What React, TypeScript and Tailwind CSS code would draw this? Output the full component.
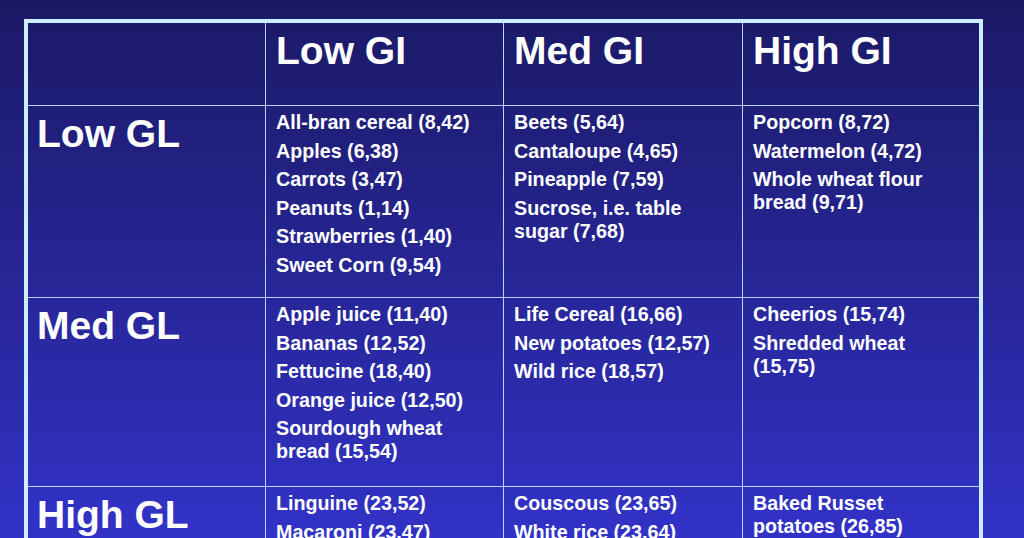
import React from "react";

const colHeads = ["Low GI", "Med GI", "High GI"];
const rows: { head: string; cells: string[][] }[] = [
  {
    head: "Low GL",
    cells: [
      ["All-bran cereal (8,42)", "Apples (6,38)", "Carrots (3,47)", "Peanuts (1,14)", "Strawberries (1,40)", "Sweet Corn (9,54)"],
      ["Beets (5,64)", "Cantaloupe (4,65)", "Pineapple (7,59)", "Sucrose, i.e. table sugar (7,68)"],
      ["Popcorn (8,72)", "Watermelon (4,72)", "Whole wheat flour bread (9,71)"],
    ],
  },
  {
    head: "Med GL",
    cells: [
      ["Apple juice (11,40)", "Bananas (12,52)", "Fettucine (18,40)", "Orange juice (12,50)", "Sourdough wheat bread (15,54)"],
      ["Life Cereal (16,66)", "New potatoes (12,57)", "Wild rice (18,57)"],
      ["Cheerios (15,74)", "Shredded wheat (15,75)"],
    ],
  },
  {
    head: "High GL",
    cells: [
      ["Linguine (23,52)", "Macaroni (23,47)", "Spaghetti (22,42)"],
      ["Couscous (23,65)", "White rice (23,64)"],
      ["Baked Russet potatoes (26,85)"],
    ],
  },
];

const colCls = [
  "w-[238px] border-r border-[#b9d6ff]",
  "w-[238px] border-r border-[#b9d6ff]",
  "w-[239px] border-r border-[#b9d6ff]",
  "w-[236px]",
];
const rowH = ["h-[83px] border-b border-[#b9d6ff]", "h-[192px] border-b border-[#b9d6ff]", "h-[189px] border-b border-[#b9d6ff]", "h-[200px]"];

function Big({ children, first }: { children: React.ReactNode; first?: boolean }) {
  return (
    <div className={`${first ? "pl-[9px]" : "pl-[10px]"} pt-[5px] text-[39px] leading-[45px] font-bold text-white`}>
      {children}
    </div>
  );
}

function List({ items }: { items: string[] }) {
  return (
    <div className="pl-[10px] pr-[20px] pt-[5px] flex flex-col gap-[5.6px] text-[19.7px] leading-[23px] font-bold text-white">
      {items.map((t) => (
        <div key={t}>{t}</div>
      ))}
    </div>
  );
}

export default function App() {
  return (
    <div
      className="w-[1024px] h-[538px] overflow-hidden bg-gradient-to-b from-[#1b1965] to-[#3232c8] pl-[24px] pt-[19px]"
      style={{ fontFamily: '"Liberation Sans", Arial, sans-serif' }}
    >
      <div className="w-[959px] border-4 border-[#ccefff] flex flex-col">
        <div className={`flex ${rowH[0]}`}>
          <div className={colCls[0]} />
          {colHeads.map((h, i) => (
            <div key={h} className={colCls[i + 1]}>
              <Big>{h}</Big>
            </div>
          ))}
        </div>
        {rows.map((r, ri) => (
          <div key={r.head} className={`flex shrink-0 ${rowH[ri + 1]}`}>
            <div className={colCls[0]}>
              <Big first>{r.head}</Big>
            </div>
            {r.cells.map((c, ci) => (
              <div key={ci} className={colCls[ci + 1]}>
                <List items={c} />
              </div>
            ))}
          </div>
        ))}
      </div>
    </div>
  );
}
